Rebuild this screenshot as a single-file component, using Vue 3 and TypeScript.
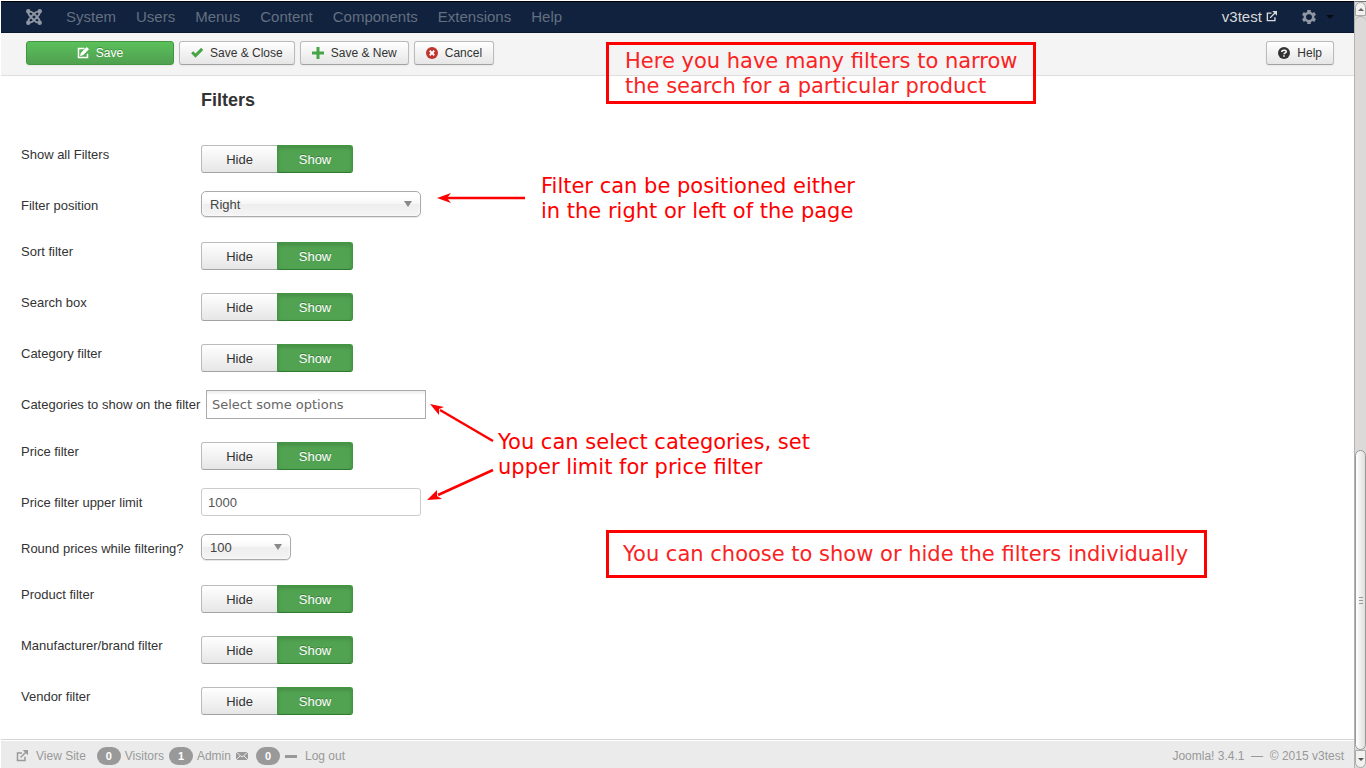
<script setup lang="ts">
import { ref } from 'vue'

interface Row {
  id: string
  label: string
  kind: 'toggle' | 'select' | 'multi' | 'text'
  value: string
  options?: string[]
}

const menus = ['System', 'Users', 'Menus', 'Content', 'Components', 'Extensions', 'Help']

const rows = ref<Row[]>([
  { id: 'all', label: 'Show all Filters', kind: 'toggle', value: 'Show' },
  { id: 'position', label: 'Filter position', kind: 'select', value: 'Right', options: ['Right', 'Left'] },
  { id: 'sort', label: 'Sort filter', kind: 'toggle', value: 'Show' },
  { id: 'search', label: 'Search box', kind: 'toggle', value: 'Show' },
  { id: 'category', label: 'Category filter', kind: 'toggle', value: 'Show' },
  { id: 'categories', label: 'Categories to show on the filter', kind: 'multi', value: '' },
  { id: 'price', label: 'Price filter', kind: 'toggle', value: 'Show' },
  { id: 'limit', label: 'Price filter upper limit', kind: 'text', value: '1000' },
  { id: 'round', label: 'Round prices while filtering?', kind: 'select', value: '100', options: ['10', '100', '1000'] },
  { id: 'product', label: 'Product filter', kind: 'toggle', value: 'Show' },
  { id: 'brand', label: 'Manufacturer/brand filter', kind: 'toggle', value: 'Show' },
  { id: 'vendor', label: 'Vendor filter', kind: 'toggle', value: 'Show' },
])
</script>

<template>
  <div class="screen">
    <div class="page">
      <nav class="navbar">
        <a href="#" class="logo" aria-label="Joomla">
          <svg viewBox="0 0 24 24" width="16" height="16" fill="none" stroke="currentColor" stroke-width="2.800">
            <g v-for="a in [0, 90, 180, 270]" :key="a" :transform="`rotate(${a} 12 12)`">
              <circle cx="3.4" cy="3.4" r="3.3" fill="currentColor" stroke="none" />
              <path d="M3.600 3.600C8 2.800 9.500 4.500 12 7.200L16.800 12M12 7.200C14.500 4.500 16 2.800 20.400 3.600" />
            </g>
          </svg>
        </a>
        <a v-for="m in menus" :key="m" href="#" class="menu">{{ m }}</a>
        <a href="#" class="site">v3test
          <svg viewBox="0 0 16 16" width="11" height="11" fill="none" stroke="currentColor" stroke-width="2">
            <path d="M8 3H2v11h11V9" /><path d="M6 10l7-7" /><path d="M9 0h7v7z" fill="currentColor" stroke="none" />
          </svg>
        </a>
        <button class="gear" type="button" aria-label="Settings">
          <svg viewBox="0 0 16 16" width="14" height="14">
            <circle cx="8" cy="8" r="4.7" fill="none" stroke="#8f97a3" stroke-width="3" />
            <path d="M8 0v4M8 12v4M1 4l3.5 2M11.500 10L15 12M1 12l3.500-2M11.500 6L15 4" stroke="#8f97a3" stroke-width="4" />
            <circle cx="8" cy="8" r="3" fill="#10223e" />
          </svg>
          <svg viewBox="0 0 8 4" width="8" height="4"><path d="M0 0h8L4 4z" fill="#050a14" /></svg>
        </button>
      </nav>

      <header class="toolbar">
        <button type="button" class="btn save">
          <svg viewBox="0 0 16 16" width="12" height="12" fill="none" stroke="#fff" stroke-width="2">
            <path d="M10 2H2v12h12V9" /><path d="M4 12l1-4 8-8 3 3-8 8z" fill="#fff" stroke="none" />
          </svg>Save
        </button>
        <button type="button" class="btn">
          <svg viewBox="0 0 16 16" width="12" height="12"><path d="M1.500 7L6 11.500 15 2.500" fill="none" stroke="#46a546" stroke-width="4" /></svg>Save &amp; Close
        </button>
        <button type="button" class="btn">
          <svg viewBox="0 0 16 16" width="12" height="12"><path d="M8 0v16M0 8h16" stroke="#46a546" stroke-width="4" /></svg>Save &amp; New
        </button>
        <button type="button" class="btn">
          <svg viewBox="0 0 16 16" width="12" height="12"><circle cx="8" cy="8" r="8" fill="#bd362f" /><path d="M5 5l6 6M11 5l-6 6" stroke="#fff" stroke-width="2.400" /></svg>Cancel
        </button>
        <button type="button" class="btn help">
          <svg viewBox="0 0 16 16" width="12" height="12" fill="none"><circle cx="8" cy="8" r="8" fill="#333" /><path d="M5 6.500C5 3.500 11 3.500 11 6.200 11 8 8 7.700 8 9.800M8 11v2" stroke="#fff" stroke-width="2" /></svg>Help
        </button>
      </header>

      <main>
        <h3>Filters</h3>
        <form @submit.prevent>
          <div v-for="r in rows" :key="r.id" class="row" :class="r.kind">
            <label v-if="r.kind !== 'toggle'" class="name" :for="r.id">{{ r.label }}</label>
            <span v-else :id="r.id" class="name">{{ r.label }}</span>
            <div v-if="r.kind === 'toggle'" class="group" role="radiogroup" :aria-labelledby="r.id">
              <label v-for="o in ['Hide', 'Show']" :key="o" class="choice" :class="{ active: r.value === o }">
                <input v-model="r.value" type="radio" :name="r.id" :value="o" />{{ o }}
              </label>
            </div>
            <div v-else-if="r.kind === 'select'" class="drop" :class="r.id">
              <select :id="r.id" v-model="r.value">
                <option v-for="o in r.options" :key="o">{{ o }}</option>
              </select>
              <svg viewBox="0 0 8 6" width="8" height="6"><path d="M0 0h8L4 6z" fill="#888" /></svg>
            </div>
            <input v-else :id="r.id" v-model="r.value" type="text" :placeholder="r.kind === 'multi' ? 'Select some options' : ''" />
          </div>
        </form>
      </main>

      <footer>
        <a href="#" class="view">
          <svg viewBox="0 0 16 16" width="12" height="12" fill="none" stroke="currentColor" stroke-width="2">
            <path d="M8 4H2v10h10V9" /><path d="M6 10l7-7" /><path d="M9 0h7v7z" fill="currentColor" stroke="none" />
          </svg>View Site
        </a>
        <span class="badge">0</span><span class="what">Visitors</span>
        <span class="badge">1</span><span class="what">Admin</span>
        <svg class="mail" viewBox="0 0 12 8" width="12" height="8"><path d="M0 0h12v8H0z" fill="#999" /><path d="M0 0l6 5 6-5M0 8l4-4M12 8L8 4" fill="none" stroke="#ebebeb" /></svg>
        <span class="badge">0</span>
        <a href="#" class="logout"><i class="dash"></i>Log out</a>
        <span class="copy">Joomla! 3.4.1 &nbsp;—&nbsp; © 2015 v3test</span>
      </footer>
    </div>

    <div class="scroll" aria-hidden="true">
      <span class="cap up"><svg viewBox="0 0 6 3" width="6" height="3"><path d="M0 3h6L3 0z" fill="#666" /></svg></span>
      <span class="track"></span>
      <span class="thumb"><i></i><i></i><i></i></span>
      <span class="cap down"><svg viewBox="0 0 6 3" width="6" height="3"><path d="M0 0h6L3 3z" fill="#555" /></svg></span>
    </div>

    <p class="note boxed intro">Here you have many filters to narrow<br />the search for a particular product</p>
    <p class="note where">Filter can be positioned either<br />in the right or left of the page</p>
    <p class="note pick">You can select categories, set<br />upper limit for price filter</p>
    <p class="note boxed each">You can choose to show or hide the filters individually</p>
    <svg class="arrows" width="540" height="520" fill="red" stroke="red">
      <path d="M525 198H447M493 441L440 410M493 470L438 495" stroke-width="2.500" />
      <path d="M437 198l14-5-4 5 4 5zM430 404l14 3-5 2 0 6zM427 500l10-10v6l5 3z" stroke="none" />
    </svg>
  </div>
</template>

<style>
body { margin: 0; background: #fff; }
</style>

<style scoped>
* { box-sizing: border-box; }
.screen { position: relative; display: flex; min-height: 100vh; padding: 1px 0 0 1px; font: 13px/18px "Liberation Sans", Arial, sans-serif; color: #333; }
.page { flex: 1; display: flex; flex-direction: column; }
a { color: inherit; text-decoration: none; }
button, input, select { font: inherit; color: inherit; margin: 0; }

.navbar { display: flex; align-items: center; height: 32px; padding: 0 20px 0 25px; background: #10223e; border-top: 1px solid #000; border-bottom: 1px solid #0a162a; font-size: 15px; color: #646f80; }
.logo { display: flex; margin-right: 14px; color: #8f97a3; }
.menu { padding: 0 10px; }
.site { margin-left: auto; color: #d9d9d9; }
.gear { display: flex; align-items: center; gap: 10px; margin-left: 25px; padding: 0; border: 0; background: none; }

.toolbar { display: flex; gap: 5px; height: 43px; padding: 8px 20px 0 25px; background: #f4f4f4; border-bottom: 1px solid #dedede; }
.btn { display: flex; align-items: center; justify-content: center; gap: 7px; height: 24px; padding: 0 11px; border: 1px solid #bbb; border-bottom-color: #a2a2a2; border-radius: 3px; background: linear-gradient(#fff, #e6e6e6); box-shadow: 0 1px 2px #0000000d; font-size: 12px; }
.save { width: 148px; border-color: #409740; background: linear-gradient(#5bc05b, #50a050); color: #fff; text-shadow: 0 -1px 0 #00000040; }
.help { margin-left: auto; }

main { flex: 1; padding: 15px 20px 24px; }
h3 { margin: 0 0 31px 180px; font-size: 18px; line-height: 18px; }
.row { display: flex; align-items: flex-start; margin-bottom: 18px; }
.row:last-child { margin-bottom: 0; }
.name { width: 180px; padding-top: 6px; white-space: nowrap; }
.group { display: flex; margin-top: 5px; }
.choice { width: 77px; height: 28px; border: 1px solid #bbb; border-bottom-color: #a2a2a2; border-radius: 3px 0 0 3px; background: linear-gradient(#fff, #e6e6e6); line-height: 27px; text-align: center; }
.choice + .choice { margin-left: -1px; width: 76px; border-radius: 0 3px 3px 0; }
.choice.active { border-color: #409740 #409740 #2f7a2f; background: #51a351; color: #fff; box-shadow: inset 0 2px 4px #00000026; text-shadow: 0 -1px 0 #00000040; }
.choice input { position: absolute; opacity: 0; }
.drop { position: relative; width: 220px; height: 28px; }
.drop.round { width: 90px; }
.drop select { appearance: none; width: 100%; height: 26px; padding: 2px 8px 0; border: 1px solid #aaa; border-radius: 5px; background: linear-gradient(#fff 20%, #f6f6f6 50%, #eee 52%, #f4f4f4); box-shadow: inset 0 0 3px #fff, 0 1px 1px #0000001a; color: #444; }
.drop svg { position: absolute; right: 9px; top: 10px; pointer-events: none; }
.row > input { width: 220px; height: 28px; padding: 0 6px; border: 1px solid #ccc; border-radius: 3px; background: #fff; color: #555; }
.multi > input { height: 29px; margin-left: 5px; padding: 0 5px; border-color: #aaa; border-radius: 0; background: linear-gradient(#eee 1%, #fff 15%); font-family: "DejaVu Sans", sans-serif; }
.multi > input::placeholder { color: #666; opacity: 1; }

footer { display: flex; align-items: center; height: 29px; padding: 4px 10px 0 15px; border-top: 1px solid #d4d4d4; background: #ebebeb; box-shadow: inset 0 1px 0 #fff; font-size: 12px; color: #999; }
.view { display: flex; align-items: center; gap: 8px; margin-right: 11px; }
.badge { width: 24px; height: 18px; border-radius: 9px; background: #999; color: #fff; font-size: 11px; font-weight: bold; text-align: center; }
.what { margin: 0 5px 0 4px; }
.mail { margin-right: 8px; }
.logout { display: flex; align-items: center; gap: 8px; margin-left: 5px; }
.dash { width: 12px; height: 3px; background: #999; }
.copy { margin-left: auto; }

.scroll { display: flex; flex-direction: column; width: 12px; background: #dcdad8; border-left: 1px solid #b5b3b0; border-top: 1px solid #777; }
.cap { display: flex; align-items: center; justify-content: center; height: 14px; border: 1px solid #aaa; background: #f2f1f0; }
.up { border-radius: 6px 6px 0 0; }
.down { height: 18px; border-radius: 0 0 6px 6px; }
.track { flex: 435; border-top: 1px solid #aaa; border-radius: 6px 6px 0 0; }
.thumb { flex: 299; display: flex; flex-direction: column; align-items: center; justify-content: center; gap: 2px; border: 1px solid #999; border-radius: 6px; background: linear-gradient(90deg, #fff, #e0dfdd); }
.thumb i { width: 4px; height: 1px; background: #999; }

.note { position: absolute; margin: 0; font: 21px/25px "DejaVu Sans", sans-serif; color: red; white-space: nowrap; }
.boxed { border: 3px solid red; color: #fa2323; }
.intro { left: 606px; top: 42px; padding: 4px 15px 2px 16px; }
.where { left: 541px; top: 174px; }
.pick { left: 498px; top: 430px; }
.each { left: 606px; top: 530px; padding: 9px 16px 8px 14px; }
.arrows { position: absolute; left: 0; top: 0; pointer-events: none; }
</style>
